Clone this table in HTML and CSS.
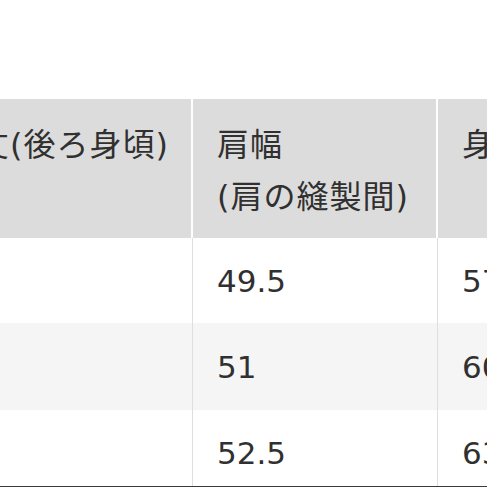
FILE: index.html
```html
<!DOCTYPE html>
<html lang="ja">
<head>
<meta charset="utf-8">
<title>サイズ表</title>
<link rel="stylesheet" href="styles.css">
</head>
<body>
<div class="frame">
  <table class="sizes">
    <colgroup>
      <col class="c1"><col class="c2"><col class="c3">
    </colgroup>
    <thead>
      <tr>
        <th>着丈(後ろ身頃)</th>
        <th>肩幅<br>(肩の縫製間)</th>
        <th>身幅</th>
      </tr>
    </thead>
    <tbody>
      <tr><td></td><td>49.5</td><td>57</td></tr>
      <tr class="alt"><td></td><td>51</td><td>60</td></tr>
      <tr><td></td><td>52.5</td><td>63</td></tr>
    </tbody>
  </table>
</div>
</body>
</html>
```

FILE: styles.css
```css
html, body {
  margin: 0;
  padding: 0;
  background: #ffffff;
}

.frame {
  width: 487px;
  height: 487px;
  box-sizing: border-box;
  padding-top: 99px;
  overflow: hidden;
  border-bottom: 1px solid #3a3a3a;
}

.sizes {
  margin-left: -80px;
  border-collapse: separate;
  border-spacing: 0;
  table-layout: fixed;
  width: 763px;
  color: #303030;
  font-family: "DejaVu Sans", "Noto Sans CJK JP", sans-serif;
}

.c1 { width: 273px; }
.c2 { width: 245px; }
.c3 { width: 245px; }

.sizes th {
  background: #dcdcdc;
  font-weight: normal;
  text-align: left;
  vertical-align: top;
  font-size: 32px;
  letter-spacing: 1px;
  line-height: 52px;
  padding: 20px 0 15px 24px;
  border-right: 2px solid #ffffff;
  white-space: nowrap;
  overflow: hidden;
}

.sizes td {
  height: 85px;
  padding: 0 0 0 24px;
  font-size: 31px;
  line-height: 36px;
  vertical-align: middle;
  border-right: 1px solid #dedede;
  white-space: nowrap;
}

.sizes tr.alt td {
  background: #f5f5f5;
  height: 87px;
}
```
